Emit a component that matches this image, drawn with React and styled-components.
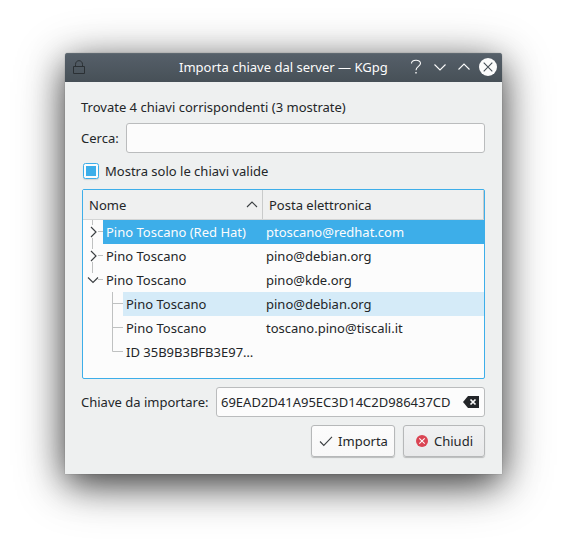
import React from "react";
import styled, { createGlobalStyle, css } from "styled-components";

const GlobalStyle = createGlobalStyle`
  * { box-sizing: border-box; }
  body {
    margin: 0;
    background: #fff;
    font: 13px/18px "Noto Sans", sans-serif;
    color: #232629;
  }
  svg { display: block; flex: none; }
`;

const Desktop = styled.main`
  height: 551px;
  overflow: hidden;
  padding: 53px 65px 0;
`;

const Window = styled.section`
  width: 437px;
  height: 421px;
  border-radius: 3px 3px 0 0;
  background: #eef0f0;
  box-shadow:
    0 0 1px rgba(0, 0, 0, 0.5),
    0 10px 34px -2px rgba(0, 0, 0, 0.62),
    0 10px 52px -2px rgba(0, 0, 0, 0.42);
`;

const TitleBar = styled.header`
  height: 29px;
  padding: 0 5px 1px 7px;
  display: flex;
  align-items: center;
  border-radius: 3px 3px 0 0;
  background: linear-gradient(#56606a, #475057);
  box-shadow: inset 0 1px #5f6971;
  color: #fcfcfc;
`;

const Title = styled.h1`
  flex: 1;
  margin: 0;
  padding-left: 93px;
  font-size: 13px;
  font-weight: 400;
  white-space: nowrap;
`;

const WindowControls = styled.div`
  display: flex;
  gap: 6px;
`;

const Content = styled.div`
  padding: 16px 17px 0 16px;
  display: flex;
  flex-direction: column;
`;

const Summary = styled.p`
  margin: 0 0 7px;
`;

const Field = styled.label`
  display: flex;
  align-items: center;
  justify-content: space-between;
  height: 30px;
  white-space: nowrap;
`;

const InputBox = styled.span`
  width: ${(p) => p.$width}px;
  height: 30px;
  padding: 0 4px;
  display: flex;
  align-items: center;
  justify-content: space-between;
  border: 1px solid #babcbd;
  border-radius: 3px;
  background: #fcfcfc;
`;

const CheckRow = styled.label`
  display: flex;
  align-items: center;
  gap: 6px;
  height: 18px;
  margin: 9px 0 9px 2px;
`;

const CheckBox = styled.span`
  width: 16px;
  height: 16px;
  padding: 2px;
  border: 1px solid #3daee9;
  border-radius: 2.5px;
  background: #fcfcfc;
  box-shadow: 0 1px 1px rgba(0, 0, 0, 0.12);

  &::after {
    content: "";
    display: block;
    height: 10px;
    background: #3daee9;
  }
`;

const Tree = styled.div`
  margin-left: 1px;
  height: 190px;
  border: 1px solid #3daee9;
  border-radius: 2px;
  background: #fcfcfc;
`;

const TreeHeader = styled.div`
  display: flex;
  height: 30px;
  border-bottom: 1px solid #d3d5d5;
  background: #eff0f0;
`;

const HeaderCell = styled.div`
  width: ${(p) => p.$width}px;
  padding: 0 4px 0 6px;
  display: flex;
  align-items: center;
  justify-content: space-between;
  border-right: 1px solid #c9cbcb;
`;

const TreeRow = styled.div`
  display: flex;
  height: 24px;
`;

const RowBody = styled.div`
  flex: 1;
  display: flex;
  align-items: center;
  padding-left: 3px;
  white-space: nowrap;
  ${(p) => p.$state === "selected" && css`background: #3daee9; color: #fcfcfc;`}
  ${(p) => p.$state === "hover" && css`background: #d5ebf8;`}
`;

const NameCell = styled.span`
  width: ${(p) => p.$width}px;
`;

const KeyField = styled(Field)`
  margin-top: 8px;
`;

const Actions = styled.div`
  display: flex;
  justify-content: flex-end;
  gap: 8px;
  margin-top: 8px;
`;

const Button = styled.button`
  width: ${(p) => p.$width}px;
  height: 32px;
  padding: 0 0 0 1px;
  display: flex;
  align-items: center;
  justify-content: center;
  gap: ${(p) => p.$gap}px;
  border: 1px solid #b6b8b9;
  border-radius: 3px;
  background: ${(p) => (p.$plain ? "linear-gradient(#fcfcfc, #f8f8f8)" : "linear-gradient(#f1f2f3, #e8e9ea)")};
  box-shadow: 0 1px 1px rgba(0, 0, 0, 0.22);
  font: inherit;
  color: inherit;
`;

const Icon = ({ w = 18, h = 18, children, color = "currentColor", sw = 1.1 }) => (
  <svg width={w} height={h} viewBox={`0 0 ${w} ${h}`} fill="none" stroke={color} strokeWidth={sw}>
    {children}
  </svg>
);

const LINE = "#bfc1c1";
const INK = "#3b3f42";

const Branch = ({ kind }) => {
  if (kind.startsWith("child")) {
    return (
      <Icon w={40} h={24} color={LINE} sw={1}>
        <path d={kind === "child-last" ? "M29.5 0V11.5H40" : "M29.5 0V24M29.5 11.5H40"} />
      </Icon>
    );
  }
  return (
    <Icon w={20} h={24} color={LINE} sw={1}>
      {kind === "open" ? (
        <>
          <path d="M9.5 0V5M15 11.5H20" />
          <path d="M5 9.5L10 14.5L15 9.5" stroke={INK} strokeWidth="1.15" />
        </>
      ) : (
        <>
          <path d="M9.5 0V5M9.5 18V24M15 11.5H20" />
          <path d="M8 7L13 12L8 17" stroke={INK} strokeWidth="1.15" />
        </>
      )}
    </Icon>
  );
};

const rows = [
  { kind: "closed", name: "Pino Toscano (Red Hat)", email: "ptoscano@redhat.com", state: "selected" },
  { kind: "closed", name: "Pino Toscano", email: "pino@debian.org" },
  { kind: "open", name: "Pino Toscano", email: "pino@kde.org" },
  { kind: "child", name: "Pino Toscano", email: "pino@debian.org", state: "hover" },
  { kind: "child", name: "Pino Toscano", email: "toscano.pino@tiscali.it" },
  { kind: "child-last", name: "ID 35B9B3BFB3E97…", email: "" },
];

export default function App() {
  return (
    <>
      <GlobalStyle />
      <Desktop>
        <Window>
          <TitleBar>
            <Icon w={14} h={14} color="#2b3034" sw={1}>
              <path d="M1.5 6.5H12.5V13.5H1.5ZM3.5 6.5V4.5C3.5 -0.6 10.5 -0.6 10.5 4.5V6.5" />
            </Icon>
            <Title>Importa chiave dal server — KGpg</Title>
            <WindowControls>
              <Icon>
                <path d="M4.5 5.5C4.5 1.4 13.5 1.2 13.5 5.3C13.5 8.5 9 8.3 9 12.2" />
                <path d="M8.3 14.8H9.7" strokeWidth="1.4" />
              </Icon>
              <Icon><path d="M3.5 6.5L9 12L14.5 6.5" /></Icon>
              <Icon><path d="M3.5 11.5L9 6L14.5 11.5" /></Icon>
              <Icon>
                <circle cx="9" cy="9" r="9" fill="#fcfcfc" stroke="none" />
                <path d="M4.7 4.7L13.3 13.3M13.3 4.7L4.7 13.3" stroke="#475057" />
              </Icon>
            </WindowControls>
          </TitleBar>
          <Content>
            <Summary>Trovate 4 chiavi corrispondenti (3 mostrate)</Summary>
            <Field>
              Cerca:
              <InputBox $width={359} />
            </Field>
            <CheckRow>
              <CheckBox />
              Mostra solo le chiavi valide
            </CheckRow>
            <Tree>
              <TreeHeader>
                <HeaderCell $width={180}>
                  Nome
                  <Icon w={12} h={12} color={INK}><path d="M1 8L6 3L11 8" /></Icon>
                </HeaderCell>
                <HeaderCell $width={221}>Posta elettronica</HeaderCell>
              </TreeHeader>
              {rows.map((row, i) => (
                <TreeRow key={i}>
                  <Branch kind={row.kind} />
                  <RowBody $state={row.state}>
                    <NameCell $width={row.kind.startsWith("child") ? 140 : 160}>{row.name}</NameCell>
                    {row.email}
                  </RowBody>
                </TreeRow>
              ))}
            </Tree>
            <KeyField>
              Chiave da importare:
              <InputBox $width={269}>
                69EAD2D41A95EC3D14C2D986437CD
                <Icon w={18} h={12} color="#fcfcfc" sw={1.7}>
                  <path d="M1 6L6 0H17V12H6Z" fill="#232629" stroke="none" />
                  <path d="M8.5 3.5L13.5 8.5M13.5 3.5L8.5 8.5" />
                </Icon>
              </InputBox>
            </KeyField>
            <Actions>
              <Button $width={84} $gap={5} $plain>
                <Icon w={14} h={12} color={INK}><path d="M1 6.5L4.8 10.5L13 1.8" /></Icon>
                Importa
              </Button>
              <Button $width={82} $gap={6}>
                <Icon w={12} h={12} color="#fcfcfc">
                  <circle cx="6" cy="6" r="6" fill="#da4453" stroke="none" />
                  <path d="M3.3 3.3L8.7 8.7M8.7 3.3L3.3 8.7" />
                </Icon>
                Chiudi
              </Button>
            </Actions>
          </Content>
        </Window>
      </Desktop>
    </>
  );
}
